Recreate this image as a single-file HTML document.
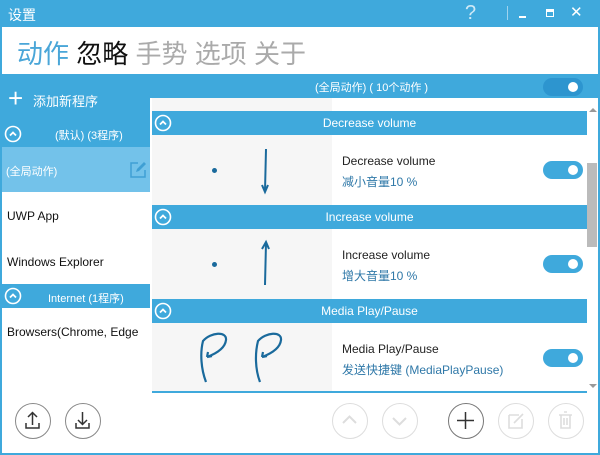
<!DOCTYPE html><html><head><style>
*{margin:0;padding:0;box-sizing:border-box}
body{width:600px;height:455px;overflow:hidden;background:#3fa9dc;font-family:"Liberation Sans","Noto Sans CJK SC",sans-serif;position:relative}
.a{position:absolute}
.circ{position:absolute}
.hdr{position:absolute;left:152px;width:435px;height:24px;background:#3fa9dc;color:#fff;font-size:12px;text-align:center;line-height:24px}
.row{position:absolute;left:152px;width:435px;height:70px;background:#fff}
.g{position:absolute;left:0;top:0;width:180px;height:100%;background:#f6f6f6}
.t1{position:absolute;left:190px;font-size:12px;color:#222}
.t2{position:absolute;left:190px;font-size:12px;color:#2f78a8}
.tog{position:absolute;left:391px;width:40px;height:18px;border-radius:9px;background:#3fa9dc}
.tog:after{content:"";position:absolute;right:5px;top:4px;width:10px;height:10px;border-radius:50%;background:#fff}
.btn{position:absolute;top:403px;width:36px;height:36px;border-radius:50%;border:1.5px solid #ddd;background:#fff}
</style></head><body>
<svg width="0" height="0" style="position:absolute"><defs><g id="cv"><circle cx="9" cy="9" r="7.5" stroke="#fff" stroke-width="1.6" fill="none"/><path d="M6 10.5 L9 7.5 L12 10.5" stroke="#fff" stroke-width="1.8" fill="none"/></g></defs></svg>
<div class="a" style="left:8px;top:5px;color:#fff;font-size:14px">设置</div>
<div class="a" style="left:465px;top:2px;color:#cfe9f6;font-size:20px">?</div>
<div class="a" style="left:507px;top:6px;width:1px;height:14px;background:#9fd3ee"></div>
<div class="a" style="left:519px;top:16px;width:7px;height:2px;background:#fff"></div>
<div class="a" style="left:546px;top:9px;width:8px;height:8px;border:1.5px solid #fff;border-top-width:3px"></div>
<div class="a" style="left:570px;top:3px;color:#fff;font-size:15px">✕</div>
<div class="a" style="left:2px;top:27px;width:596px;height:47px;background:#fff"></div>
<div class="a" style="left:17px;top:34px;font-size:26px;white-space:nowrap"><span style="color:#4aa6d8">动作</span> <span style="color:#111">忽略</span> <span style="color:#aaa">手势</span> <span style="color:#aaa">选项</span> <span style="color:#aaa">关于</span></div>
<!-- left -->
<div class="a" style="left:8px;top:85px;color:#fff;font-size:26px;line-height:26px;font-weight:300">+</div>
<div class="a" style="left:33px;top:91px;color:#fff;font-size:13px">添加新程序</div>
<svg class="circ" style="left:4px;top:125px" width="18" height="18"><use href="#cv"/></svg>
<div class="a" style="left:55px;top:127px;color:#fff;font-size:11px">(默认) (3程序)</div>
<div class="a" style="left:2px;top:147px;width:148px;height:45px;background:#73c2ea"></div>
<div class="a" style="left:6px;top:163px;color:#fff;font-size:11px">(全局动作)</div>
<svg class="a" style="left:129px;top:161px" width="18" height="18"><path d="M9 2 H2 V16 H16 V9" stroke="#3f9fd4" stroke-width="1.5" fill="none"/><path d="M7 11 L8 8 L15 1 L17 3 L10 10 Z" fill="#3f9fd4"/></svg>
<div class="a" style="left:2px;top:192px;width:148px;height:92px;background:#fff"></div>
<div class="a" style="left:7px;top:209px;font-size:12px;color:#111">UWP App</div>
<div class="a" style="left:7px;top:255px;font-size:12px;color:#111">Windows Explorer</div>
<svg class="circ" style="left:4px;top:287px" width="18" height="18"><use href="#cv"/></svg>
<div class="a" style="left:48px;top:290px;color:#fff;font-size:11px">Internet (1程序)</div>
<div class="a" style="left:2px;top:308px;width:148px;height:145px;background:#fff"></div>
<div class="a" style="left:7px;top:325px;font-size:12px;color:#111;white-space:nowrap">Browsers(Chrome, Edge</div>
<!-- right top -->
<div class="a" style="left:315px;top:79px;color:#fff;font-size:11px">(全局动作) ( 10个动作 )</div>
<div class="tog" style="left:543px;top:78px;background:#2d95cf"></div>
<div class="a" style="left:150px;top:98px;width:448px;height:355px;background:#fff"></div>
<div class="a" style="left:152px;top:98px;width:180px;height:13px;background:#f6f6f6"></div>
<div class="hdr" style="top:111px">Decrease volume</div><svg class="circ" style="left:154px;top:114px" width="18" height="18"><use href="#cv"/></svg>
<div class="row" style="top:135px"><div class="g"></div>
<div class="a" style="left:60px;top:33px;width:5px;height:5px;border-radius:50%;background:#1a6a9c"></div>
<svg class="a" style="left:108px;top:12px" width="12" height="48"><path d="M6 2 L5 44 M2 38 L5 45 L8 38" stroke="#1a6a9c" stroke-width="2" fill="none"/></svg>
<div class="t1" style="top:19px">Decrease volume</div><div class="t2" style="top:38px">减小音量10 %</div><div class="tog" style="top:26px"></div></div>
<div class="hdr" style="top:205px">Increase volume</div><svg class="circ" style="left:154px;top:208px" width="18" height="18"><use href="#cv"/></svg>
<div class="row" style="top:229px"><div class="g"></div>
<div class="a" style="left:60px;top:33px;width:5px;height:5px;border-radius:50%;background:#1a6a9c"></div>
<svg class="a" style="left:108px;top:10px" width="12" height="52"><path d="M6 4 L5 46 M2 10 L6 3 L9 10" stroke="#1a6a9c" stroke-width="2" fill="none"/></svg>
<div class="t1" style="top:19px">Increase volume</div><div class="t2" style="top:38px">增大音量10 %</div><div class="tog" style="top:26px"></div></div>
<div class="hdr" style="top:299px">Media Play/Pause</div><svg class="circ" style="left:154px;top:302px" width="18" height="18"><use href="#cv"/></svg>
<div class="row" style="top:323px;height:68px"><div class="g"></div>
<svg class="a" style="left:45px;top:8px" width="90" height="54"><path d="M9 51 C4 38 3 22 6 10 C14 1 30 0 29 9 C28 18 18 23 10 26 M10 26 L11 21 M10 26 L15 25" stroke="#1a6a9c" stroke-width="2.2" fill="none"/><path d="M63 51 C58 38 58 22 61 10 C69 1 85 0 84 9 C83 18 73 23 65 26 M65 26 L66 21 M65 26 L70 25" stroke="#1a6a9c" stroke-width="2.2" fill="none"/></svg>
<div class="t1" style="top:19px">Media Play/Pause</div><div class="t2" style="top:38px">发送快捷键 (MediaPlayPause)</div><div class="tog" style="top:26px"></div></div>
<div class="a" style="left:152px;top:391px;width:435px;height:2px;background:#3fa9dc"></div>
<div class="a" style="left:587px;top:163px;width:10px;height:84px;background:#bbb"></div>
<div class="a" style="left:589px;top:104px;border:4px solid transparent;border-bottom-color:#999"></div>
<div class="a" style="left:589px;top:384px;border:4px solid transparent;border-top-color:#999"></div>
<!-- buttons -->
<div class="btn" style="left:15px;border-color:#888"><svg width="33" height="33"><path d="M16.5 9 V21 M12 13 L16.5 8.5 L21 13 M10 19 V24 H23 V19" stroke="#333" stroke-width="1.5" fill="none"/></svg></div>
<div class="btn" style="left:65px;border-color:#888"><svg width="33" height="33"><path d="M16.5 8 V20 M12 16 L16.5 20.5 L21 16 M10 19 V24 H23 V19" stroke="#333" stroke-width="1.5" fill="none"/></svg></div>
<div class="btn" style="left:332px"><svg width="33" height="33"><path d="M10 19 L16.5 12.5 L23 19" stroke="#ddd" stroke-width="2" fill="none"/></svg></div>
<div class="btn" style="left:382px"><svg width="33" height="33"><path d="M10 14 L16.5 20.5 L23 14" stroke="#ddd" stroke-width="2" fill="none"/></svg></div>
<div class="btn" style="left:448px;border-color:#777"><svg width="33" height="33"><path d="M16.5 8 V25 M8 16.5 H25" stroke="#333" stroke-width="1.5"/></svg></div>
<div class="btn" style="left:498px"><svg width="33" height="33"><path d="M10 11 H20 M10 11 V24 H23 V15 M15 19 L24 10" stroke="#ddd" stroke-width="1.6" fill="none"/></svg></div>
<div class="btn" style="left:548px"><svg width="33" height="33"><path d="M10 11 H23 M12 11 V24 H21 V11 M15 8 H18 M15 14 V21 M18 14 V21" stroke="#ddd" stroke-width="1.6" fill="none"/></svg></div>
</body></html>
